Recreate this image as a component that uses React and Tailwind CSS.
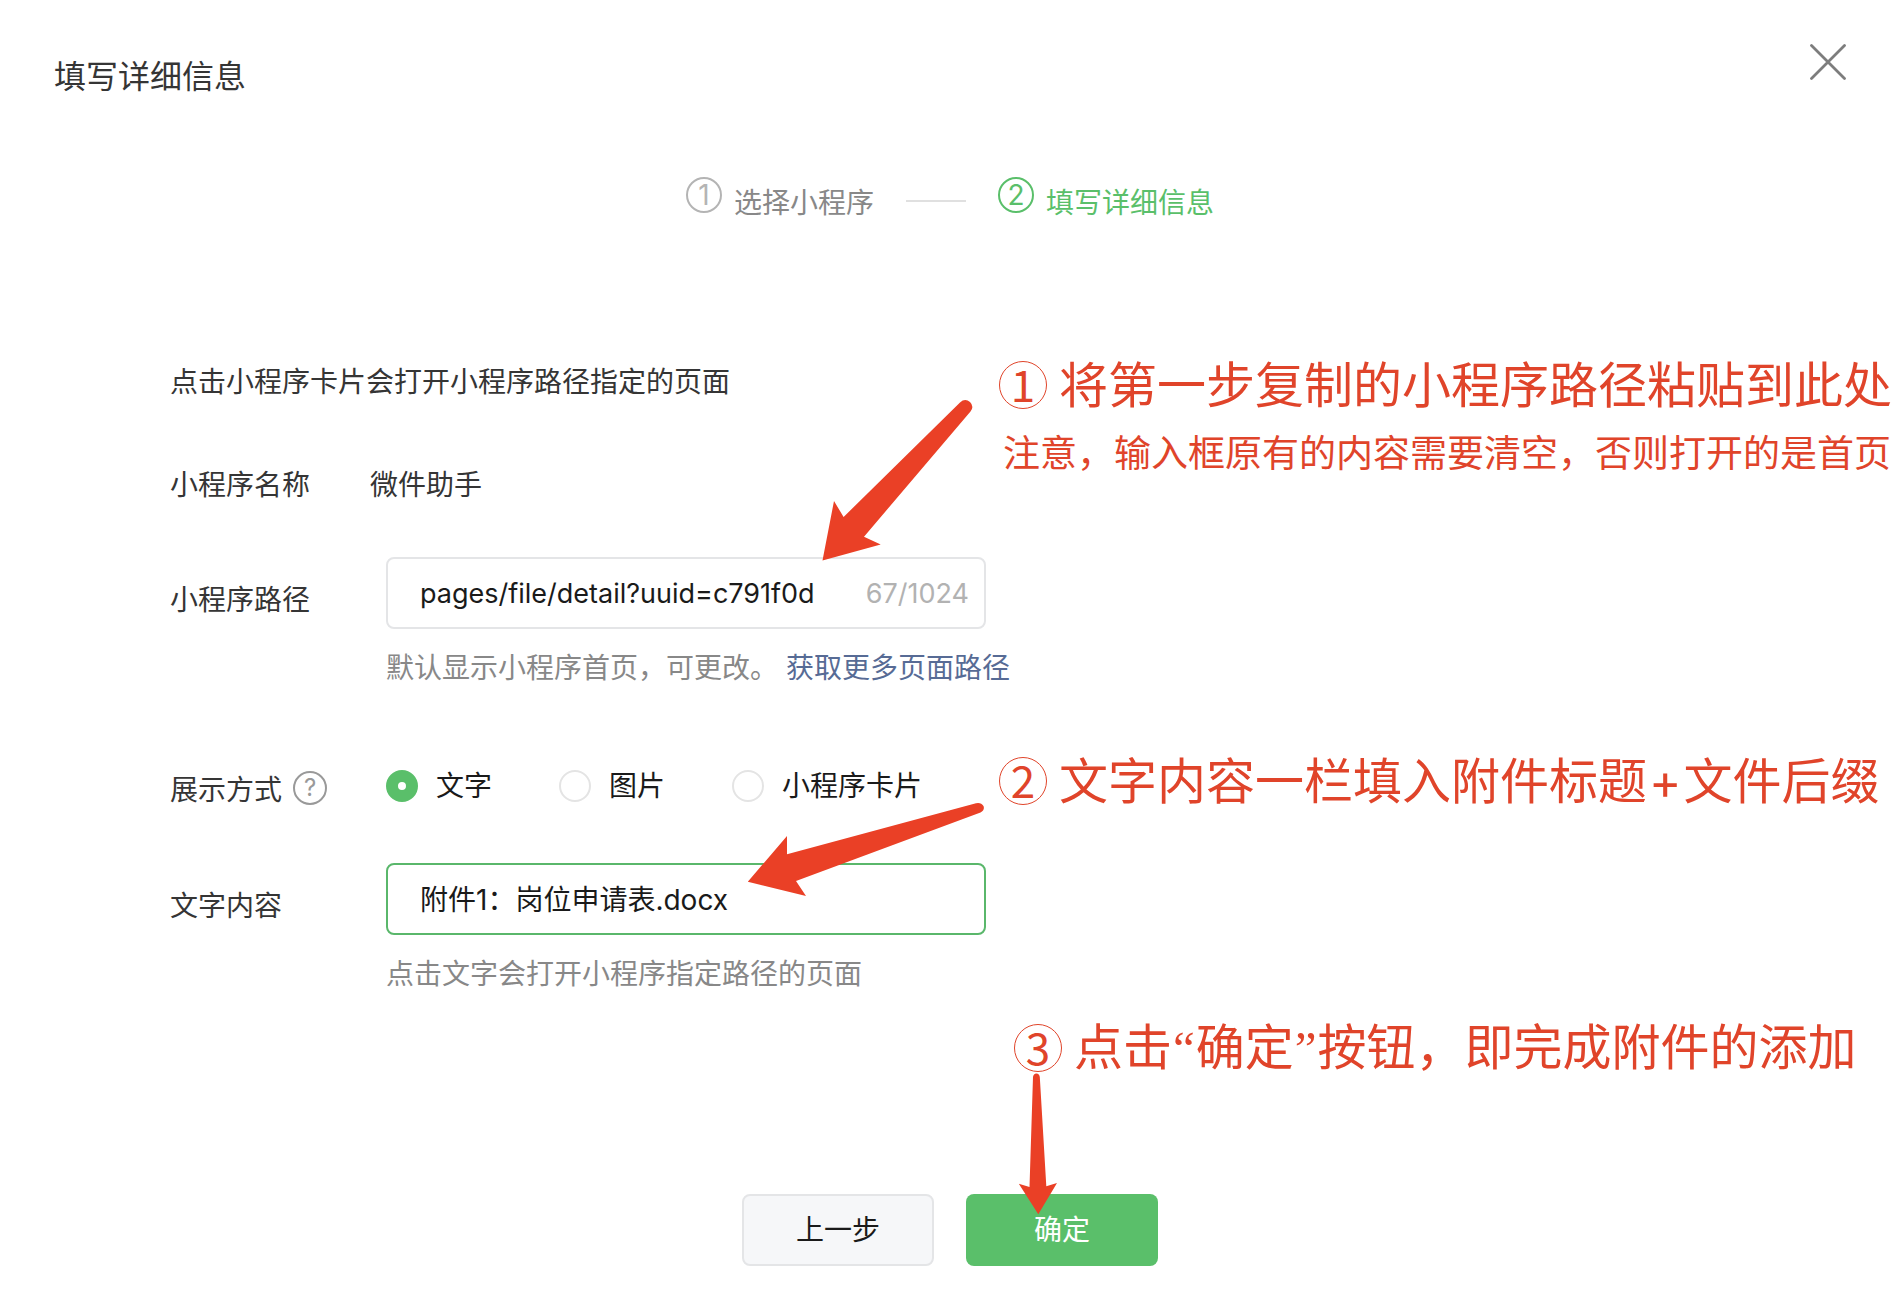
import React from "react";

const ARROW = "#ea4026";

function Step({ number, label, active }) {
  return (
    <li className={active ? "flex items-start gap-3 text-[#5abf6a]" : "flex items-start gap-3 text-[#888888]"}>
      <span
        className={
          active
            ? "flex size-9 items-center justify-center rounded-full border-2 border-[#5abf6a]"
            : "flex size-9 items-center justify-center rounded-full border-2 border-[#b4b4b4] text-[#b4b4b4]"
        }
      >
        {number}
      </span>
      <span className="mt-1.5">{label}</span>
    </li>
  );
}

function Choice({ id, label, defaultChecked }) {
  return (
    <label htmlFor={id} className="flex items-center gap-[18px] text-[#1a1a1a]">
      <input
        id={id}
        type="radio"
        name="display"
        defaultChecked={defaultChecked}
        className="size-8 appearance-none rounded-full border-2 border-[#e4e4e4] bg-white checked:border-[12px] checked:border-[#5abf6a]"
      />
      {label}
    </label>
  );
}

function Note({ number, children }) {
  return (
    <p className="flex items-center gap-3 text-[49px] leading-[60px] whitespace-nowrap">
      <span className="flex size-12 items-center justify-center rounded-full border border-[#e0442a] pb-1 font-['Noto_Sans_CJK_SC',sans-serif] text-[44px]">
        {number}
      </span>
      <span className="pt-0.5">{children}</span>
    </p>
  );
}

export default function App() {
  return (
    <div className="min-h-screen overflow-hidden bg-white pb-8 font-['Inter','Noto_Sans_CJK_SC',sans-serif] text-[28px] leading-10 text-[#353535]">
      <header className="flex items-start justify-between pt-11 pr-[52px] pl-[54px]">
        <h1 className="mt-[13px] text-[32px]">填写详细信息</h1>
        <button type="button" aria-label="关闭" className="text-[#7d7d7d]">
          <svg className="size-9" viewBox="0 0 36 36" fill="none" stroke="currentColor" strokeWidth="2.8" strokeLinecap="round">
            <path d="M1.5 1.5 34.5 34.5M34.5 1.5 1.5 34.5" />
          </svg>
        </button>
      </header>

      <ol className="mt-20 flex items-start justify-center pl-0.5">
        <Step number="1" label="选择小程序" />
        <li aria-hidden="true" className="mx-8 mt-[23px] h-0.5 w-[60px] bg-[#e0e0e0]" />
        <Step number="2" label="填写详细信息" active />
      </ol>

      <form className="mt-[139px]" onSubmit={(e) => e.preventDefault()}>
        <div className="pl-[170px]">
          <p>点击小程序卡片会打开小程序路径指定的页面</p>

          <div className="mt-[63px] flex">
            <span className="w-[200px]">小程序名称</span>
            <span>微件助手</span>
          </div>

          <div className="relative mt-[52px] flex items-start">
            <label htmlFor="path" className="mt-[23px] w-[216px]">小程序路径</label>
            <div>
              <div className="flex h-[72px] w-[600px] items-center rounded-lg border-2 border-[#e4e5e7] pt-0.5 pr-[15px] pl-8 text-[27px]">
                <input id="path" type="text" defaultValue="pages/file/detail?uuid=c791f0d" className="min-w-0 flex-1 text-[#1a1a1a] outline-none" />
                <span className="text-[#b2b2b2]">67/1024</span>
              </div>
              <p className="mt-[19px] text-[#888888]">
                默认显示小程序首页，可更改。
                <a href="#paths" className="ml-2 text-[#576b95]">获取更多页面路径</a>
              </p>
            </div>
            <div className="absolute -top-[203px] left-[829px] text-[#e0442a]">
              <Note number="1">将第一步复制的小程序路径粘贴到此处</Note>
              <p className="mt-2 ml-1 text-[37px] leading-[60px] whitespace-nowrap">注意，输入框原有的内容需要清空，否则打开的是首页</p>
            </div>
            <svg className="pointer-events-none absolute -top-[161px] left-[650px] h-[168px] w-[156px]" viewBox="820 396 156 168" fill={ARROW}>
              <path d="M822.5 560.5 834 501 843.6 517 960 402.5Q965 398 970 402Q974.500 406.500 970.500 411.500L864 536.700 880.700 544.500Z" />
            </svg>
          </div>

          <div className="relative mt-[78px] flex items-start">
            <div className="mt-1 flex w-[216px] items-start gap-[11px]">
              <span>展示方式</span>
              <button type="button" aria-label="展示方式说明" className="mt-px flex size-[34px] items-center justify-center rounded-full border-2 border-[#999999] text-2xl text-[#999999]">
                ?
              </button>
            </div>
            <div role="radiogroup" aria-label="展示方式" className="flex gap-[67px]">
              <Choice id="mode-text" label="文字" defaultChecked />
              <Choice id="mode-image" label="图片" />
              <Choice id="mode-card" label="小程序卡片" />
            </div>
            <div className="absolute -top-4 left-[829px] text-[#e0442a]">
              <Note number="2">
                文字内容一栏填入附件标题<span className="mx-0.5">+</span>文件后缀
              </Note>
            </div>
          </div>

          <div className="relative mt-[53px] flex items-start">
            <label htmlFor="content" className="mt-[23px] w-[216px]">文字内容</label>
            <div>
              <input
                id="content"
                type="text"
                defaultValue="附件1：岗位申请表.docx"
                className="block h-[72px] w-[600px] rounded-lg border-2 border-[#5ab76b] px-8 pb-0.5 text-[#1a1a1a] outline-none"
              />
              <p className="mt-[19px] text-[#888888]">点击文字会打开小程序指定路径的页面</p>
            </div>
            <svg className="pointer-events-none absolute -top-[67px] left-[574px] h-[108px] w-[246px]" viewBox="744 796 246 108" fill={ARROW}>
              <path d="M747.800 881.700 787 836V854.300L976 803.200Q981 802 983.500 806Q985 810 980.500 812.500L796 881 806 896Z" />
            </svg>
          </div>
        </div>

        <div className="mt-[200px] flex justify-center pl-0.5">
          <div className="relative flex gap-8">
            <button type="button" className="h-[72px] w-48 rounded-lg border-2 border-[#e4e5e7] bg-[#f6f7f9] text-[#1a1a1a]">上一步</button>
            <button type="submit" className="h-[72px] w-48 rounded-lg bg-[#5abf6a] text-white">确定</button>
            <div className="absolute -top-[178px] left-[272px] text-[#e0442a]">
              <Note number="3">
                点击<span className="mx-px font-['Liberation_Serif',serif]">“</span>确定
                <span className="mx-px font-['Liberation_Serif',serif]">”</span>按钮，即完成附件的添加
              </Note>
            </div>
            <svg className="pointer-events-none absolute -top-[124px] left-[272px] h-[148px] w-[46px]" viewBox="1014 1070 46 148" fill={ARROW}>
              <path d="M1038.300 1214.300 1018.800 1183.700 1029.500 1187 1033 1077Q1033.500 1073.500 1036.400 1073.500T1039.800 1077L1046.300 1186.300 1057 1183Z" />
            </svg>
          </div>
        </div>
      </form>
    </div>
  );
}
